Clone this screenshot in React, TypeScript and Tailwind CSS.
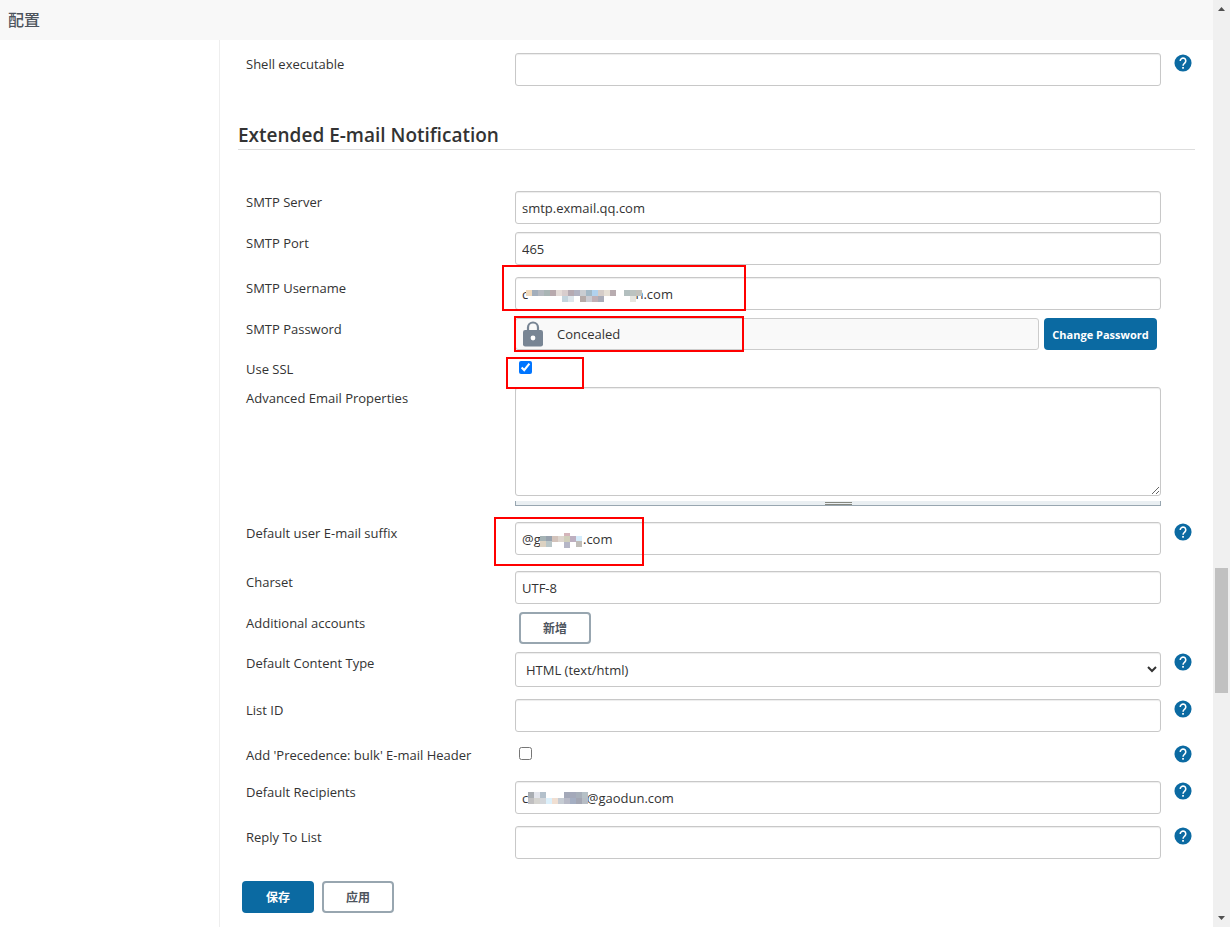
import { useState } from "react";
import type { ReactNode } from "react";

type Cell = [x: number, y: number, color: string];

const usernameCells: Cell[] = [
	[0, 0, "#efd9bd"], [6, 0, "#a3aebb"], [12, 0, "#b5b9c0"], [18, 0, "#a9b5b5"],
	[24, 0, "#b8a9ad"], [30, 0, "#e5dcd8"], [36, 0, "#d8cdcd"], [42, 0, "#b5aab2"],
	[48, 0, "#b1b3c2"], [54, 0, "#c9cdd1"], [60, 0, "#a3b9c6"], [66, 0, "#b1d2ee"],
	[72, 0, "#d5cdc8"], [78, 0, "#e6e0d6"], [84, 0, "#b8acb0"], [98, 0, "#b3bfbf"],
	[104, 0, "#bcc3c0"], [110, 0, "#c2c2bc"], [36, 6, "#c3d4dd"], [42, 6, "#dde6ec"],
	[54, 6, "#b5aba8"], [60, 6, "#cbccd2"], [66, 6, "#c0b0b5"], [72, 6, "#a9acb8"],
	[104, 6, "#e6e6e0"],
];

const suffixCells: Cell[] = [
	[24, 0, "#d5b5ba"], [0, 3, "#a5b3b5"], [6, 3, "#98a2ae"], [12, 3, "#d3c3bb"],
	[18, 3, "#ded6cf"], [24, 3, "#d0cfbb"], [30, 3, "#bdafc0"], [36, 3, "#d5ecfb"],
	[0, 8, "#dcd2c2"], [6, 8, "#b9c6c8"], [24, 9, "#b5b6c6"], [36, 8, "#c0bdb8"],
];

const recipientCells: Cell[] = [
	[0, 0, "#a9adb2"], [6, 0, "#e3e5ec"], [12, 0, "#b3c0cb"], [36, 0, "#a3a8b8"],
	[42, 0, "#a4a9ba"], [48, 0, "#a7afba"], [54, 0, "#b5c0c6"], [0, 6, "#c0bfc0"],
	[6, 6, "#d5d4d0"], [12, 6, "#d3d6da"], [18, 6, "#dcf0fb"], [24, 6, "#f0dfd2"],
	[30, 6, "#c6ccd3"], [36, 6, "#b7b9c6"], [42, 6, "#a4aec2"], [48, 6, "#a3a6b3"],
	[54, 6, "#b6bcc4"],
];

function Mosaic({ cells, className }: { cells: Cell[]; className: string }) {
	return (
		<svg
			className={`absolute pointer-events-none ${className}`}
			width="116"
			height="16"
			shapeRendering="crispEdges"
			aria-hidden="true"
		>
			{cells.map(([x, y, color]) => (
				<rect key={`${x}-${y}`} x={x} y={y} width="6" height="6" fill={color} />
			))}
		</svg>
	);
}

function Highlight({ className }: { className: string }) {
	return (
		<div
			className={`absolute z-10 border-2 border-[#ff0000] pointer-events-none ${className}`}
		/>
	);
}

function HelpButton({ label }: { label: string }) {
	return (
		<button type="button" aria-label={`Help: ${label}`} className="mt-px ml-[13px] block cursor-pointer">
			<svg width="18" height="18" viewBox="0 0 24 24" fill="#0b6aa2" aria-hidden="true">
				<circle cx="12" cy="12" r="11.4" />
				<path
					d="M8.3 9.2a3.7 3.7 0 1 1 6.2 2.7c-1.4 1.3-2.4 1.9-2.4 3.9"
					fill="none"
					stroke="#fff"
					strokeWidth="2.1"
				/>
				<rect x="10.9" y="17.3" width="2.3" height="2.3" fill="#fff" />
			</svg>
		</button>
	);
}

interface RowProps {
	label: string;
	id: string;
	className?: string;
	help?: boolean;
	children: ReactNode;
}

function Row({ label, id, className = "mb-2", help = false, children }: RowProps) {
	return (
		<div className={`flex items-start ${className}`}>
			<label htmlFor={id} className="w-[277px] shrink-0 pl-2 leading-[22px]">
				{label}
			</label>
			<div className="relative flex-1 min-w-0">{children}</div>
			<div className="w-[34px] shrink-0">{help && <HelpButton label={label} />}</div>
		</div>
	);
}

function TextInput({ id, initial = "" }: { id: string; initial?: string }) {
	const [value, setValue] = useState(initial);
	return (
		<input
			id={id}
			type="text"
			value={value}
			onChange={(e) => setValue(e.target.value)}
			className="block w-full h-[33px] px-1.5 pt-px bg-white border border-[#c8c8c8] rounded-[3px] shadow-[inset_0_1px_1px_rgba(0,0,0,0.075)]"
		/>
	);
}

const outlineButton =
	"w-[72px] h-8 pt-0.5 border-2 border-[#98a6b0] rounded bg-white text-xs font-bold text-[#4d545d] cursor-pointer";

function ScrollBar() {
	return (
		<div className="w-[17px] shrink-0 bg-[#f0f0f0] flex flex-col items-center py-[7px]" aria-hidden="true">
			<svg width="7" height="4" fill="#505050">
				<path d="M0 4 3.5 0 7 4z" />
			</svg>
			<div className="grow-[557]" />
			<div className="w-[13px] h-[125px] bg-[#c1c1c1]" />
			<div className="grow-[223]" />
			<svg width="7" height="4" fill="#505050">
				<path d="M0 0 3.5 4 7 0z" />
			</svg>
		</div>
	);
}

function App() {
	const [useSsl, setUseSsl] = useState(true);
	const [bulk, setBulk] = useState(false);
	const [contentType, setContentType] = useState("html");

	return (
		<div className="flex min-h-screen bg-white text-[13px] text-[#333] font-['Open_Sans','Noto_Sans_CJK_SC',sans-serif]">
			<div className="flex-1 min-w-0 flex flex-col">
				<header className="h-10 px-2 flex items-center bg-[#f8f8f8]">
					<h1 className="text-base font-medium text-[#4d545d]">配置</h1>
				</header>
				<div className="flex-1 flex">
					<aside className="w-[220px] shrink-0 border-r border-[#eee]" />
					<main className="flex-1 min-w-0 px-[18px] pt-[13px]">
						<form onSubmit={(e) => e.preventDefault()}>
							<Row label="Shell executable" id="shell" help className="mb-8">
								<TextInput id="shell" />
							</Row>

							<h2 className="h-8 mb-[41px] pt-px border-b border-[#ddd] text-[19px] leading-8 font-semibold">
								Extended E-mail Notification
							</h2>

							<Row label="SMTP Server" id="server">
								<TextInput id="server" initial="smtp.exmail.qq.com" />
							</Row>
							<Row label="SMTP Port" id="port" className="mb-3">
								<TextInput id="port" initial="465" />
							</Row>
							<Row label="SMTP Username" id="username">
								<TextInput
									id="username"
									initial={"c\u2003\u2003\u2003\u2003\u2003\u2003\u2003\u2003\u2005n.com"}
								/>
								<Mosaic cells={usernameCells} className="left-[11px] top-[13px]" />
								<Highlight className="-left-[13px] -top-3 w-[244px] h-[46px]" />
							</Row>
							<Row label="SMTP Password" id="password">
								<div className="flex gap-[5px] pr-1">
									<div className="flex-1 h-8 pl-[7px] flex items-center gap-[14px] bg-[#f9f9f9] border border-[#ccc] rounded-[3px]">
										<svg width="20" height="26" viewBox="0 0 20 26" aria-hidden="true">
											<path
												d="M5 10V6.5a5 5 0 0 1 10 0V10"
												fill="none"
												stroke="#788594"
												strokeWidth="2.2"
											/>
											<rect x="0" y="9" width="20" height="16.5" rx="2.2" fill="#788594" />
											<circle cx="10" cy="17" r="2.4" fill="#fff" />
										</svg>
										<span className="pt-0.5">Concealed</span>
									</div>
									<button
										id="password"
										type="button"
										className="w-[113px] h-8 pt-0.5 rounded bg-[#0b6aa2] text-white text-[11px] font-bold whitespace-nowrap cursor-pointer"
									>
										Change Password
									</button>
								</div>
								<Highlight className="-left-px -top-0.5 w-[230px] h-9" />
							</Row>
							<Row label="Use SSL" id="ssl" className="mb-[7px]">
								<input
									id="ssl"
									type="checkbox"
									checked={useSsl}
									onChange={(e) => setUseSsl(e.target.checked)}
									className="block ml-1 mt-[3px] size-[13px]"
								/>
								<Highlight className="-left-[9px] -top-px w-[78px] h-8" />
							</Row>
							<Row label="Advanced Email Properties" id="properties" className="mb-4">
								<textarea
									id="properties"
									className="block w-full h-[109px] p-1.5 bg-white border border-[#c8c8c8] rounded-[3px] shadow-[inset_0_1px_1px_rgba(0,0,0,0.075)]"
								/>
								<div className="mt-[5px] h-[5px] flex justify-center border border-t-0 border-[#98a6b0] bg-[#eaeff2]">
									<div className="mt-px w-[27px] h-[3px] border-y border-[#85877f]" />
								</div>
							</Row>
							<Row label="Default user E-mail suffix" id="suffix" help className="mb-4">
								<TextInput id="suffix" initial={"@g\u2003\u2003\u2003\u2005.com"} />
								<Mosaic cells={suffixCells} className="left-[25px] top-[11px]" />
								<Highlight className="-left-[21px] -top-[5px] w-[150px] h-[49px]" />
							</Row>
							<Row label="Charset" id="charset">
								<TextInput id="charset" initial="UTF-8" />
							</Row>
							<Row label="Additional accounts" id="accounts">
								<button id="accounts" type="button" className={`${outlineButton} block ml-1`}>
									新增
								</button>
							</Row>
							<Row label="Default Content Type" id="contentType" help className="mb-3">
								<select
									id="contentType"
									value={contentType}
									onChange={(e) => setContentType(e.target.value)}
									className="block w-full h-[35px] px-1.5 pt-px bg-white border border-[#c8c8c8] rounded-[3px] shadow-[inset_0_1px_1px_rgba(0,0,0,0.075)]"
								>
									<option value="html">HTML (text/html)</option>
								</select>
							</Row>
							<Row label="List ID" id="listId" help className="mb-3">
								<TextInput id="listId" />
							</Row>
							<Row label="Add 'Precedence: bulk' E-mail Header" id="bulk" help className="mb-[15px]">
								<input
									id="bulk"
									type="checkbox"
									checked={bulk}
									onChange={(e) => setBulk(e.target.checked)}
									className="block ml-1 mt-[3px] size-[13px]"
								/>
							</Row>
							<Row label="Default Recipients" id="recipients" help className="mb-3">
								<TextInput
									id="recipients"
									initial={"c\u2003\u2003\u2003\u2003\u2002@gaodun.com"}
								/>
								<Mosaic cells={recipientCells} className="left-[13px] top-[11px]" />
							</Row>
							<Row label="Reply To List" id="replyTo" help className="mb-[22px]">
								<TextInput id="replyTo" />
							</Row>

							<div className="flex gap-2 pl-1 pb-3">
								<button
									type="submit"
									className="w-[72px] h-8 pt-0.5 rounded bg-[#0b6aa2] text-white text-xs font-bold cursor-pointer"
								>
									保存
								</button>
								<button type="button" className={outlineButton}>
									应用
								</button>
							</div>
						</form>
					</main>
				</div>
			</div>
			<ScrollBar />
		</div>
	);
}

export default App;
